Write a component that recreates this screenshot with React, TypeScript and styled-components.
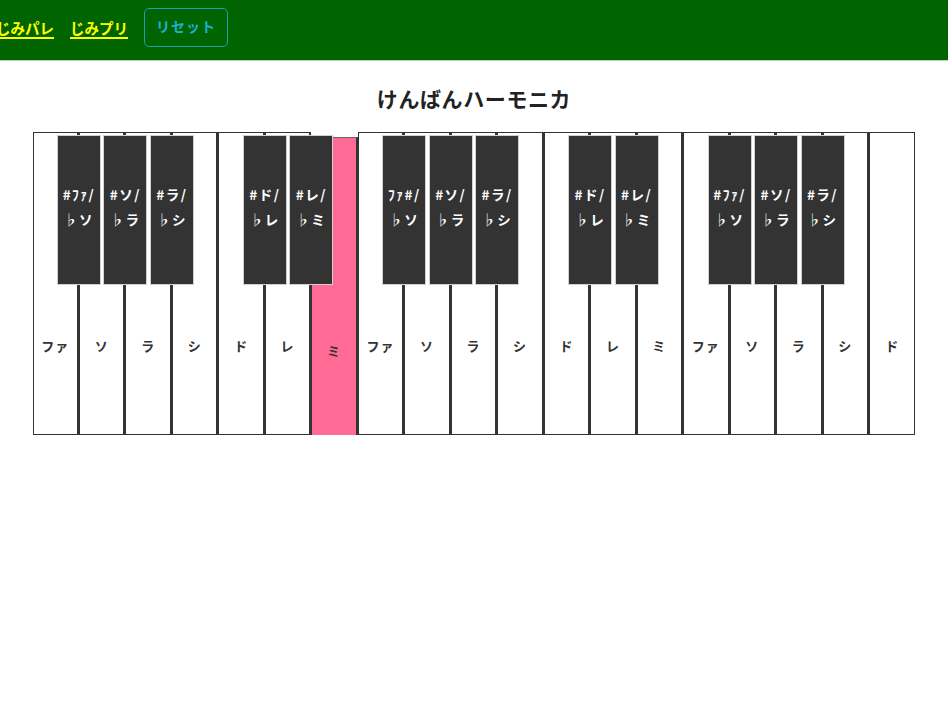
import styled, { createGlobalStyle } from 'styled-components'

const KEY_W = 46.47
const BLACK_W = 44

const GlobalStyle = createGlobalStyle`
  html, body {
    margin: 0;
    padding: 0;
    background: #ffffff;
  }
  body {
    font-family: "Noto Sans CJK JP", "Noto Sans", sans-serif;
  }
`

const Header = styled.header`
  height: 60px;
  background-color: #006400;
  border-bottom: 1px solid #b8d4b8;
  display: flex;
  align-items: flex-start;
  overflow: hidden;
`

const Nav = styled.nav`
  display: flex;
  align-items: center;
  gap: 16px;
  margin-left: -4px;
  padding-top: 8px;
`

const NavLink = styled.a`
  color: #ffff00;
  font-size: 14.5px;
  font-weight: 700;
  text-decoration: underline;
  text-underline-offset: 3px;
  text-decoration-thickness: 2px;
  line-height: 38px;
  cursor: pointer;
`

const ResetButton = styled.button`
  height: 39px;
  width: 84px;
  padding: 0 0 4px;
  background: transparent;
  border: 1px solid #17a2b8;
  border-radius: 5px;
  color: #1ab2d2;
  font-family: "Noto Sans CJK JP", sans-serif;
  font-size: 14px;
  font-weight: 700;
  letter-spacing: 1px;
  cursor: pointer;
`

const Title = styled.h1`
  margin: 22px 0 19px;
  text-align: center;
  font-size: 21px;
  font-weight: 700;
  letter-spacing: 0.6px;
  color: #222;
  line-height: 30px;
`

const Keyboard = styled.div`
  position: relative;
  display: flex;
  width: ${KEY_W * 19}px;
  margin: 0 auto;
`

const WhiteKey = styled.div<{ pressed?: boolean; last?: boolean }>`
  box-sizing: border-box;
  width: ${KEY_W}px;
  height: 303px;
  flex: none;
  border-style: solid;
  border-width: 1px ${(p) => (p.last ? 1 : 2)}px 1px 1px;
  border-color: #333;
  border-top-color: ${(p) => (p.pressed ? '#666' : '#333')};
  background-color: ${(p) => (p.pressed ? '#ff6b95' : '#ffffff')};
  transform: ${(p) => (p.pressed ? 'translateY(5px)' : 'none')};
  display: flex;
  justify-content: center;
  padding-top: 203px;
`

const WhiteLabel = styled.span`
  font-size: 13px;
  font-weight: 700;
  color: #333;
  line-height: 20px;
  letter-spacing: 1px;
`

const BlackKey = styled.div`
  position: absolute;
  top: 3px;
  box-sizing: border-box;
  width: ${BLACK_W}px;
  height: 150px;
  background-color: #333;
  border: 1px solid #d0d0d0;
  display: flex;
  flex-direction: column;
  align-items: center;
  justify-content: center;
  padding-bottom: 6px;
  z-index: 2;
`

const BlackLabel = styled.span`
  color: #ffffff;
  font-size: 13.5px;
  font-weight: 700;
  line-height: 25px;
  letter-spacing: 1.5px;
  white-space: nowrap;
`

const whites = [
  'ファ', 'ソ', 'ラ', 'シ', 'ド', 'レ', 'ミ',
  'ファ', 'ソ', 'ラ', 'シ', 'ド', 'レ', 'ミ',
  'ファ', 'ソ', 'ラ', 'シ', 'ド',
]

// index = white key after which the black key sits
const blacks: { at: number; top: string; bottom: string }[] = [
  { at: 0, top: '#ﾌｧ/', bottom: '♭ソ' },
  { at: 1, top: '#ソ/', bottom: '♭ラ' },
  { at: 2, top: '#ラ/', bottom: '♭シ' },
  { at: 4, top: '#ド/', bottom: '♭レ' },
  { at: 5, top: '#レ/', bottom: '♭ミ' },
  { at: 7, top: 'ﾌｧ#/', bottom: '♭ソ' },
  { at: 8, top: '#ソ/', bottom: '♭ラ' },
  { at: 9, top: '#ラ/', bottom: '♭シ' },
  { at: 11, top: '#ド/', bottom: '♭レ' },
  { at: 12, top: '#レ/', bottom: '♭ミ' },
  { at: 14, top: '#ﾌｧ/', bottom: '♭ソ' },
  { at: 15, top: '#ソ/', bottom: '♭ラ' },
  { at: 16, top: '#ラ/', bottom: '♭シ' },
]

const App = () => {
  return (
    <>
      <GlobalStyle />
      <Header>
        <Nav>
          <NavLink>じみパレ</NavLink>
          <NavLink>じみプリ</NavLink>
          <ResetButton>リセット</ResetButton>
        </Nav>
      </Header>
      <Title>けんばんハーモニカ</Title>
      <Keyboard>
        {whites.map((name, i) => (
          <WhiteKey key={i} pressed={i === 6} last={i === whites.length - 1}>
            <WhiteLabel>{name}</WhiteLabel>
          </WhiteKey>
        ))}
        {blacks.map((b) => (
          <BlackKey key={b.at} style={{ left: (b.at + 1) * KEY_W - BLACK_W / 2 }}>
            <BlackLabel>{b.top}</BlackLabel>
            <BlackLabel>{b.bottom}</BlackLabel>
          </BlackKey>
        ))}
      </Keyboard>
    </>
  )
}

export default App
